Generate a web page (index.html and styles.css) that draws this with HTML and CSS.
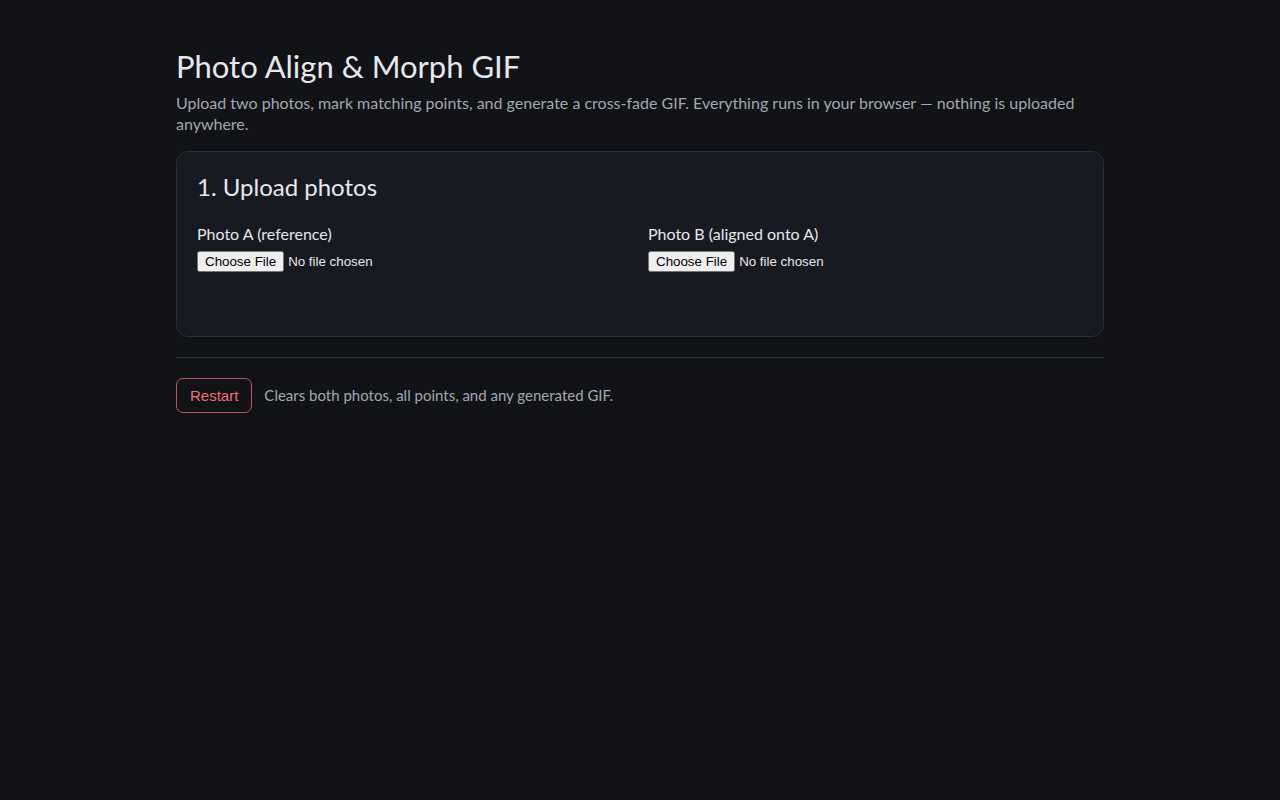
FILE: index.html
```html
<!DOCTYPE html>
<html lang="en">
<head>
<meta charset="utf-8">
<title>Photo Align &amp; Morph GIF</title>
<link rel="stylesheet" href="styles.css">
</head>
<body>
<main class="wrap">
  <h1 class="title">Photo Align &amp; Morph GIF</h1>
  <p class="lead">Upload two photos, mark matching points, and generate a cross-fade GIF. Everything runs in your browser — nothing is uploaded anywhere.</p>
  <section class="card">
    <h2 class="card-title">1. Upload photos</h2>
    <div class="grid">
      <div class="field">
        <label class="label" for="fa">Photo A (reference)</label>
        <input id="fa" class="file" type="file" accept="image/*">
      </div>
      <div class="field">
        <label class="label" for="fb">Photo B (aligned onto A)</label>
        <input id="fb" class="file" type="file" accept="image/*">
      </div>
    </div>
    <div class="preview"></div>
  </section>
  <hr class="sep">
  <div class="actions">
    <button class="btn-danger" type="button">Restart</button>
    <span class="hint">Clears both photos, all points, and any generated GIF.</span>
  </div>
</main>
</body>
</html>
```
FILE: styles.css
```css
html, body {
  margin: 0;
  background: #111317;
  color: #e6e8ec;
  font-family: Lato, "Noto Sans", sans-serif;
}
.wrap {
  max-width: 928px;
  margin: 0 auto;
  padding: 48px 0;
}
.title {
  font-size: 31px;
  font-weight: 400;
  margin: 0 0 7px;
  line-height: 1.2;
}
.lead {
  margin: 0 0 17px;
  color: #a2a7b0;
  font-size: 16px;
  line-height: 21px;
}
.card {
  background: #171a21;
  border: 1px solid #2b2f37;
  border-radius: 12px;
  padding: 20px;
}
.card-title {
  font-size: 24px;
  font-weight: 400;
  margin: 1px 0 22px;
  line-height: 1.2;
}
.grid {
  display: grid;
  grid-template-columns: 1fr 1fr;
  gap: 16px;
}
.field {
  display: flex;
  flex-direction: column;
  align-items: flex-start;
  gap: 8px;
}
.label {
  font-size: 16px;
  line-height: 19px;
}
.file {
  margin: 0;
  height: 21px;
}
.preview {
  height: 44px;
}
.sep {
  border: 0;
  border-top: 1px solid #2b2f37;
  margin: 20px 0;
}
.actions {
  display: flex;
  align-items: center;
  gap: 12px;
}
.btn-danger {
  background: transparent;
  color: #ef6f78;
  border: 1px solid #c0535d;
  border-radius: 7px;
  padding: 8px 13px;
  font-size: 15px;
  font-family: "Liberation Sans", Arial, sans-serif;
}
.hint {
  color: #a2a7b0;
  font-size: 15px;
}
```
